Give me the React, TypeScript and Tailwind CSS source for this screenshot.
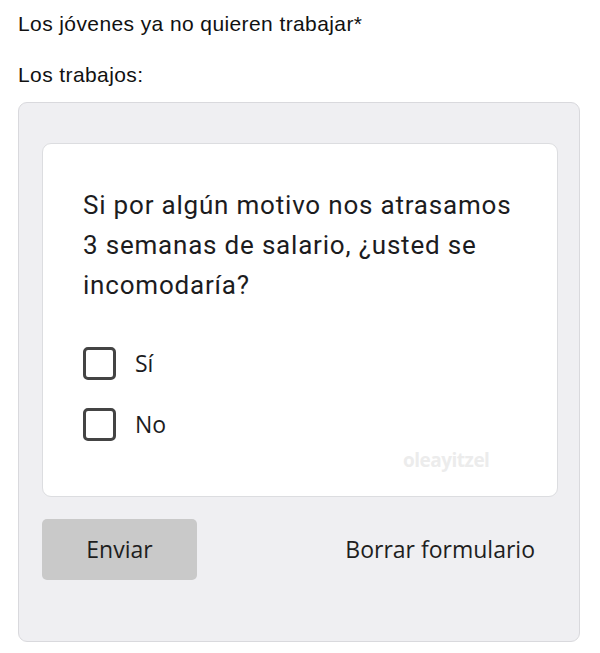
export default function App() {
  return (
    <div className="min-h-[653px] bg-white pl-[18px] pr-[20px] pt-[12px] text-[#111]">
      <p className="font-['Liberation_Sans',Arial,sans-serif] text-[21px] leading-[24px] tracking-[0.4px]">
        Los jóvenes ya no quieren trabajar*
      </p>
      <p className="mt-[27px] font-['Liberation_Sans',Arial,sans-serif] text-[21px] leading-[24px] tracking-[0.4px]">
        Los trabajos:
      </p>

      <div className="mt-[15px] h-[540px] w-[562px] rounded-[9px] border border-[#d9d9dd] bg-[#efeff2] pl-[23px] pr-[21px] pt-[40px]">
        <div className="relative h-[354px] rounded-[9px] border border-[#dcdde0] bg-white pl-[40px] pt-[41px]">
          <h2 className="font-['Roboto',sans-serif] text-[26px] leading-[40px] tracking-[0.8px] text-[#1c1c1e]">
            Si por algún motivo nos atrasamos
            <br />3 semanas de salario, ¿usted se
            <br />
            incomodaría?
          </h2>

          <div className="mt-[42px] flex flex-col gap-[28px] font-['Open_Sans',sans-serif] text-[23px] text-[#1c1c1e]">
            <label className="flex h-[33px] items-center gap-[19px]">
              <span className="h-[33px] w-[33px] rounded-[5px] border-[3px] border-[#444]" />
              Sí
            </label>
            <label className="flex h-[33px] items-center gap-[19px]">
              <span className="h-[33px] w-[33px] rounded-[5px] border-[3px] border-[#444]" />
              No
            </label>
          </div>

          <span className="absolute left-[360px] top-[302px] font-['Open_Sans',sans-serif] text-[19px] font-bold tracking-[-0.5px] text-[#ececec]">
            oleayitzel
          </span>
        </div>

        <div className="mt-[22px] flex items-center justify-between font-['Open_Sans',sans-serif] text-[23px] text-[#1e1e1e]">
          <button className="h-[61px] w-[155px] rounded-[5px] bg-[#c9c9c9]">Enviar</button>
          <button className="pr-[23px]">Borrar formulario</button>
        </div>
      </div>
    </div>
  );
}
